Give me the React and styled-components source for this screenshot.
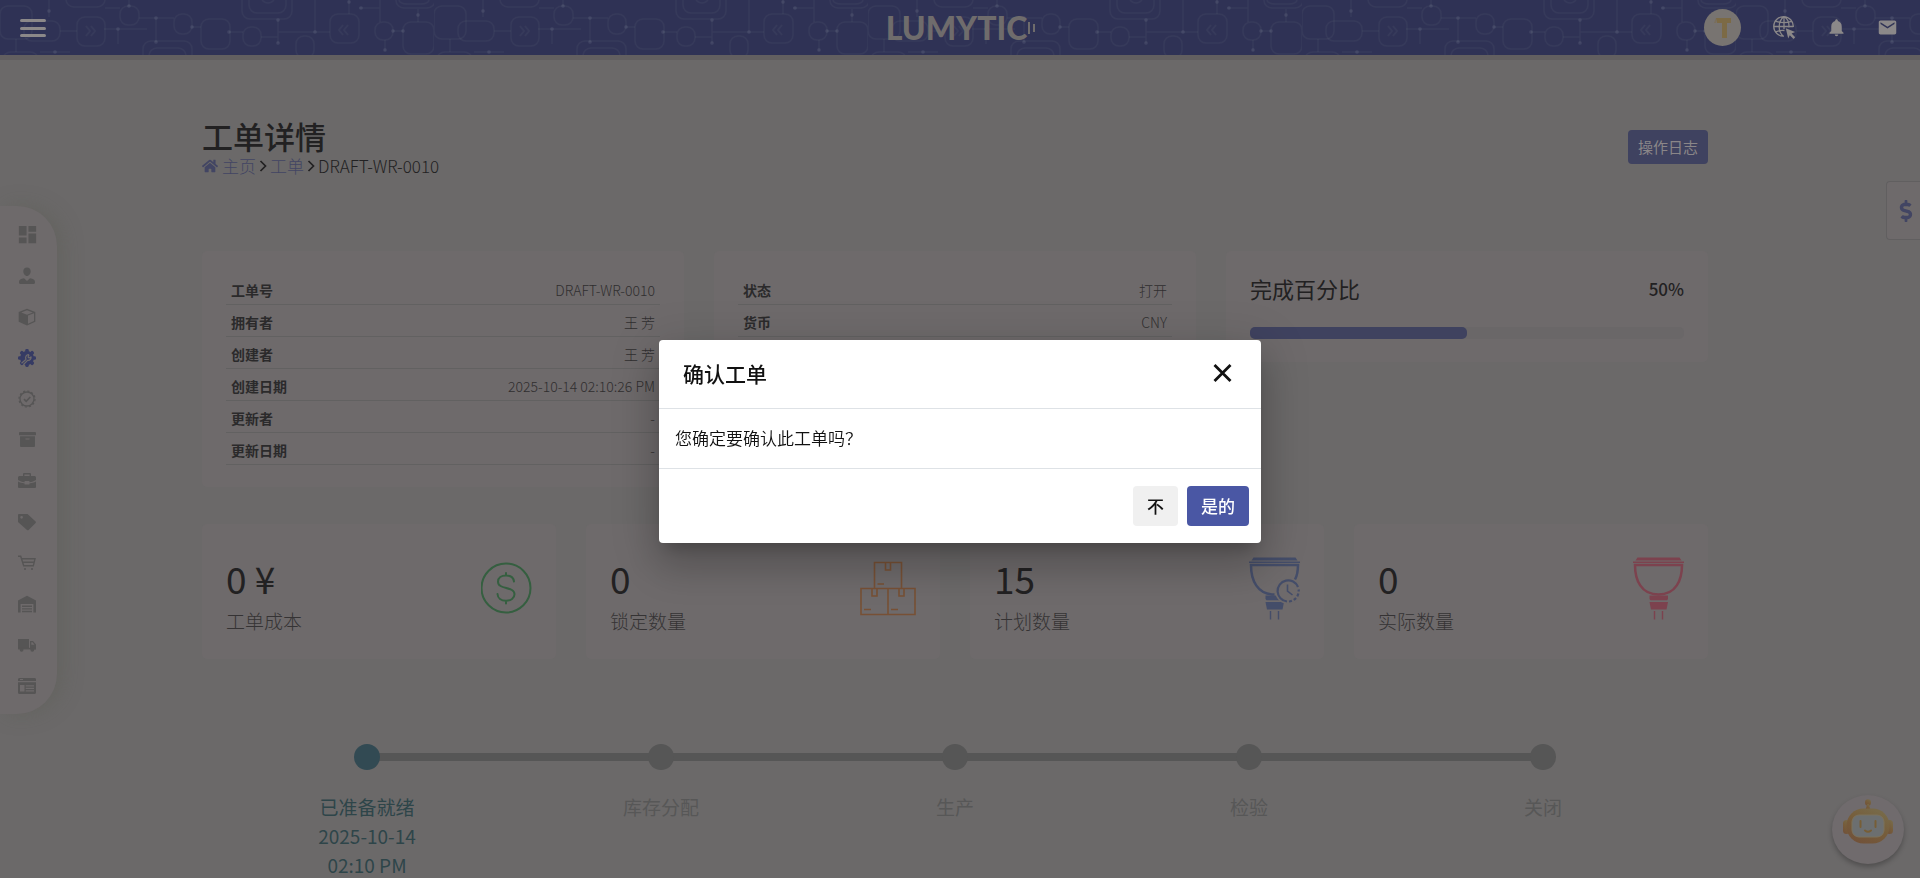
import React from "react";
import styled, { createGlobalStyle } from "styled-components";
import { FaHome, FaArchive, FaDollarSign } from "react-icons/fa";
import {
  MdDashboard,
  MdEmail,
  MdNotifications,
} from "react-icons/md";

const c = {
  page: "#6b6969",
  card: "#6e6a6b",
  header: "#2f3255",
  ink: "#222122",
  label: "#2b2a2b",
  value: "#302e2f",
  muted: "#575757",
  link: "#424563",
  teal: "#2e4549",
  rule: "#626161",
};

const GlobalStyle = createGlobalStyle`
  *, *::before, *::after { box-sizing: border-box; }
  html, body { margin: 0; padding: 0; }
  body {
    background: ${c.page};
    color: ${c.ink};
    font-family: "Noto Sans CJK SC", "Noto Sans", sans-serif;
    font-size: 17px;
  }
  button { font-family: inherit; cursor: pointer; }
  h1, h2, p, dl, dd, ol, ul { margin: 0; padding: 0; }
  ol, ul { list-style: none; }
`;

const Page = styled.div`
  position: relative;
  height: 100vh;
  overflow: hidden;
`;

const Header = styled.header`
  position: relative;
  display: grid;
  grid-template-columns: 1fr auto 1fr;
  align-items: center;
  height: 55px;
  padding: 0 22px 0 24px;
  background: ${c.header};
  box-shadow: 0 5px 0 #625f60;
`;

const Circuit = styled.svg`
  position: absolute;
  inset: 0;
  width: 100%;
  height: 100%;
`;

const IconButton = styled.button`
  position: relative;
  display: flex;
  align-items: center;
  justify-content: center;
  padding: 0;
  border: 0;
  background: none;
  color: ${(p) => p.$color || "#8b8889"};
`;

const MenuButton = styled(IconButton)`
  margin-left: -4px;
`;

const Brand = styled.a`
  position: relative;
  display: flex;
  align-items: center;
  gap: 1px;
  color: #6f6c6c;
  font: 900 32px/40px Lato, "Open Sans", sans-serif;
  text-decoration: none;
`;

const HeaderTools = styled.div`
  display: flex;
  align-items: center;
  justify-content: flex-end;
`;

const Avatar = styled.span`
  position: relative;
  display: flex;
  align-items: center;
  justify-content: center;
  width: 37px;
  height: 37px;
  margin-right: 32px;
  border-radius: 50%;
  background: #787471;
`;

const ToolGroup = styled.div`
  display: flex;
  align-items: center;
  gap: 30px;
`;

const SideNav = styled.nav`
  position: absolute;
  left: 0;
  top: 206px;
  width: 57px;
  padding: 8px 0 8px 7px;
  border-radius: 0 40px 40px 0;
  background: ${c.card};
  box-shadow: 6px 0 20px rgba(85, 88, 78, 0.35);
`;

const SideLink = styled.a`
  display: flex;
  align-items: center;
  justify-content: center;
  width: 40px;
  height: 41px;
  color: ${(p) => (p.$active ? "#363b64" : "#565555")};
`;

const PriceTab = styled.button`
  position: absolute;
  right: 0;
  top: 181px;
  display: flex;
  align-items: center;
  width: 34px;
  height: 59px;
  padding: 0 0 0 8px;
  border: 1px solid #615f60;
  border-right: 0;
  border-radius: 4px 0 0 4px;
  background: ${c.card};
  color: ${c.link};
`;

const Main = styled.main`
  padding: 62px 212px 0 202px;
`;

const TitleBar = styled.div`
  display: flex;
  align-items: center;
  justify-content: space-between;
  margin-bottom: 74px;
`;

const Title = styled.h1`
  font-size: 31px;
  font-weight: 500;
  line-height: 38px;
`;

const Crumbs = styled.nav`
  display: flex;
  align-items: center;
  gap: 3px;
  font-weight: 300;
  line-height: 22px;
`;

const CrumbLink = styled.a`
  display: flex;
  align-items: center;
  gap: 4px;
  color: ${c.link};
  text-decoration: none;
`;

const LogButton = styled.button`
  height: 34px;
  padding: 0 10px 2px;
  border: 0;
  border-radius: 4px;
  background: #3f4260;
  color: #8a8688;
  font-size: 15px;
`;

const InfoGrid = styled.section`
  display: grid;
  grid-template-columns: repeat(3, 1fr);
  align-items: start;
  gap: 30px;
  margin-bottom: 37px;
`;

const Card = styled.section`
  border-radius: 5px;
  background: ${c.card};
`;

const InfoList = styled.dl`
  padding: 22px 24px;
`;

const InfoRow = styled.div`
  display: flex;
  justify-content: space-between;
  height: 32px;
  padding: 6px 5px 0;
  border-bottom: 1px solid ${c.rule};
  font-size: 14px;
  line-height: 22px;
`;

const InfoLabel = styled.dt`
  color: ${c.label};
  font-weight: 700;
`;

const InfoValue = styled.dd`
  color: ${c.value};
  font-weight: 300;
`;

const ProgressCard = styled(Card)`
  padding: 22px 24px 23px;
`;

const ProgressHead = styled.div`
  display: flex;
  align-items: center;
  justify-content: space-between;
  margin-bottom: 23px;
  line-height: 31px;
  font-weight: 500;
`;

const ProgressTitle = styled.h2`
  font-size: 22px;
  font-weight: 400;
`;

const Track = styled.div`
  height: 12px;
  border-radius: 5px;
  background: #6a6768;
`;

const Fill = styled.div`
  height: 100%;
  border-radius: 5px;
  background: #3f425f;
`;

const StatGrid = styled.section`
  display: grid;
  grid-template-columns: repeat(4, 1fr);
  gap: 30px;
  margin-bottom: 85px;
`;

const StatCard = styled(Card)`
  display: flex;
  align-items: flex-start;
  justify-content: space-between;
  height: 135px;
  padding: 31px 24px 0;
`;

const StatValue = styled.p`
  font-size: 37px;
  line-height: 46px;
  margin-bottom: 5px;
`;

const StatLabel = styled.p`
  color: #353334;
  font-size: 19px;
  font-weight: 300;
  line-height: 30px;
`;

const StatIcon = styled.span`
  display: flex;
  padding-top: 2px;
`;

const Steps = styled.ol`
  display: grid;
  grid-template-columns: repeat(5, 1fr);
  padding: 0 18px;
`;

const Step = styled.li`
  position: relative;
  display: flex;
  flex-direction: column;
  align-items: center;
  gap: 22px;
  color: ${(p) => (p.$done ? c.teal : c.muted)};
  font-size: 19px;
  line-height: 29px;
  text-align: center;

  &:not(:last-child)::after {
    content: "";
    position: absolute;
    left: 50%;
    top: 9px;
    width: 100%;
    height: 8px;
    background: #565656;
  }
`;

const Dot = styled.span`
  position: relative;
  z-index: 1;
  width: 26px;
  height: 26px;
  border-radius: 50%;
  background: ${(p) => (p.$done ? "#324a53" : "#565656")};
`;

const StepText = styled.span`
  width: 110px;
`;

const ChatButton = styled.button`
  position: absolute;
  right: 16px;
  bottom: 14px;
  display: flex;
  justify-content: center;
  width: 72px;
  height: 69px;
  padding: 4px 0 0;
  border: 0;
  border-radius: 50%;
  background: #706b6d;
  box-shadow: 0 3px 5px rgba(0, 0, 0, 0.25);
`;

const Backdrop = styled.div`
  position: fixed;
  inset: 0;
  z-index: 10;
  display: flex;
  align-items: center;
  justify-content: center;
  padding-top: 4px;
`;

const Dialog = styled.div`
  width: 602px;
  border-radius: 4px;
  background: #fff;
  color: #111;
  box-shadow:
    0 11px 15px -7px rgba(0, 0, 0, 0.2),
    0 24px 38px 3px rgba(0, 0, 0, 0.14),
    0 9px 46px 8px rgba(0, 0, 0, 0.12);
`;

const DialogHead = styled.div`
  display: flex;
  align-items: center;
  justify-content: space-between;
  height: 69px;
  padding: 0 24px 2px;
  border-bottom: 1px solid #dee2e6;
`;

const DialogTitle = styled.h2`
  font-size: 21px;
  font-weight: 500;
  line-height: 30px;
`;

const DialogBody = styled.p`
  padding: 16px 16px 18px;
  border-bottom: 1px solid #dee2e6;
  font-weight: 350;
  line-height: 25px;
`;

const DialogFoot = styled.div`
  display: flex;
  justify-content: flex-end;
  gap: 9px;
  padding: 17px 12px;
`;

const DialogButton = styled.button`
  height: 40px;
  padding: 0 14px 1px;
  border: 0;
  border-radius: 4px;
  background: ${(p) => (p.$primary ? "#4a57a4" : "#f0f0f0")};
  color: ${(p) => (p.$primary ? "#fff" : "#111")};
  font-size: 17px;
  font-weight: 500;
`;

/* Header pattern: rounded chips joined by traces, repeated across the bar */
const chips = [
  [0, 6, 32, 33], [24, 21, 36, 20], [77, 17, 28, 29], [66, -8, 39, 15],
  [120, 6, 19, 19], [174, 14, 18, 20], [242, -10, 50, 29], [249, -8, 37, 21],
  [201, 19, 29, 30], [243, 27, 18, 19], [296, 36, 18, 22], [330, 14, 29, 29],
  [375, 22, 18, 18], [396, -7, 39, 15], [403, 22, 31, 32], [143, 41, 49, 22],
  [149, 48, 37, 18], [3, 52, 35, 14], [262, -6, 12, 9], [399, -4, 30, 8],
];
const traces =
  "M49 0V17M129 0V6M156 18V42M104 29H147M139 18H174M192 27H201M229 32H243M278 20V43M278 32H330M315 0V32M349 0V14M359 8H380M380 0V22M393 31H403M418 9V22M385 40V51M60 31H77M118 29V44M16 39V52M40 52H70M261 37H278M105 8H120";
const nodes = [
  [49, 11], [129, 6], [156, 18], [156, 42], [118, 29], [192, 27], [229, 32],
  [278, 20], [278, 43], [315, 32], [349, 2], [361, 8], [393, 31], [403, 31],
  [418, 15], [385, 50], [55, 52],
];

const HeaderPattern = () => (
  <Circuit aria-hidden="true">
    <defs>
      <pattern id="circuit" width="434" height="55" patternUnits="userSpaceOnUse">
        <g fill="none" stroke="#7a8390" strokeOpacity="0.1" strokeWidth="1.400">
          {chips.map(([x, y, w, h]) => (
            <rect key={`${x}-${y}`} x={x} y={y} width={w} height={h} rx="8" />
          ))}
          <path d={traces} />
          <path d="M86 26l4 5-4 5M91 26l4 5-4 5M343 25l-4 5 4 5M348 25l-4 5 4 5" strokeWidth="1.800" />
        </g>
        <g fill="#8a93a5" fillOpacity="0.18">
          {nodes.map(([x, y]) => (
            <circle key={`${x}-${y}`} cx={x} cy={y} r="1.800" />
          ))}
        </g>
      </pattern>
    </defs>
    <rect width="100%" height="100%" fill="url(#circuit)" />
  </Circuit>
);

const MenuIcon = () => (
  <svg width="26" height="20" viewBox="0 0 26 20" fill="currentColor">
    <rect y="1" width="26" height="3" rx="1.500" />
    <rect y="9" width="26" height="3" rx="1.500" />
    <rect y="16" width="26" height="3" rx="1.500" />
  </svg>
);

const PlugMark = () => (
  <svg width="8" height="14" viewBox="0 0 8 14" fill="currentColor">
    <rect x="0" y="1" width="2" height="12" />
    <rect x="5" y="3" width="2" height="8" />
  </svg>
);

const AvatarMark = () => (
  <svg width="18" height="21" viewBox="0 0 18 21" fill="#7c6a45">
    <path d="M2 1h15v5h-4v15H8V6H3z" />
    <path d="M0 6l2-5v5z" fillOpacity=".5" />
  </svg>
);

const GlobeCursor = () => (
  <svg width="23" height="25" viewBox="0 0 23 25" fill="none" stroke="currentColor" strokeWidth="1.300">
    <path d="M20.300 12A9.800 9.800 0 1 0 11 21.200M11 1.500V14M1.200 11.500H20.300M3 6.300Q11 9 18.500 6.300M3 16.800Q7 15 11.500 15.500M10.500 1.800C4.800 7 4.800 16 10 21M11.500 1.800C15.500 5 16.500 9 15.600 12.500" />
    <path d="M12.800 13.300l9.400 3.600-3.600 1.700 3.600 3.700-1.700 1.700-3.700-3.700-1.600 3.200z" fill="currentColor" stroke="none" />
  </svg>
);

const CloseIcon = () => (
  <svg width="28" height="28" viewBox="0 0 28 28" fill="none" stroke="currentColor" strokeWidth="2.800">
    <path d="M5.500 6l16 16M21.500 6l-16 16" />
  </svg>
);

const glyphProps = { width: 18, height: 18, viewBox: "0 0 18 18", fill: "currentColor" };

const PersonGlyph = () => (
  <svg {...glyphProps}>
    <path d="M9 .5c2.300 0 3.700 1.500 3.700 3.700S11.100 9 9 9 5.300 6.400 5.300 4.200 6.700.5 9 .5zM6 11.300l3 2.700 3-2.700c3.300.5 5 1.500 5 3.700 0 1.700-.6 2-2 2H3c-1.400 0-2-.3-2-2 0-2.200 1.700-3.200 5-3.700z" />
  </svg>
);

const BoxGlyph = () => (
  <svg {...glyphProps}>
    <path d="M9 .8l8.300 3.300v9.600L9 17.500.7 13.700V4.100zM10 7.600v8.100l6-2.700V5.200zM9 2.200L3.200 4.500 9 6.700l5.800-2.200z" fillRule="evenodd" />
  </svg>
);

const gearTeeth = [0, 45, 90, 135, 180, 225, 270, 315];

const ServiceGlyph = () => (
  <svg {...glyphProps}>
    <circle cx="9" cy="9" r="6.900" />
    {gearTeeth.map((angle) => (
      <rect key={angle} x="7.200" y="0" width="3.600" height="4" rx="1.400" transform={`rotate(${angle} 9 9)`} />
    ))}
    <path d="M8.200 10.400a2.900 2.900 0 0 1 2.900-4.600M12.900 7.400a2.900 2.900 0 0 1-3.300 3.900L5.500 15.500M8.200 10.200L3.500 14.300M11 5.800l-.9 2.200 1 1 2-1" fill="none" stroke={c.card} strokeWidth="1.200" />
  </svg>
);

const QualityGlyph = () => (
  <svg {...glyphProps} fill="none" stroke="currentColor">
    <circle cx="9" cy="9" r="7" strokeWidth="1.300" />
    <circle cx="9" cy="9" r="8" strokeWidth="1.200" strokeDasharray="2.090 2.100" />
    <path d="M6 9.200l2.200 2.100L12.300 7" strokeWidth="1.600" />
  </svg>
);

const BriefcaseGlyph = () => (
  <svg {...glyphProps}>
    <path d="M5 4V2.300C5 1.500 5.500 1 6.300 1h5.400c.8 0 1.300.5 1.300 1.300V4h3.300c1 0 1.700.7 1.700 1.700V8c-2 1.200-4 1.900-6.600 2.200V9H6.600v1.200C4 9.900 2 9.200 0 8V5.700C0 4.700.7 4 1.700 4zm1.400 0h5.200V2.400H6.400zM0 9.600c2 1 4 1.600 6.600 1.900v1h4.800v-1c2.600-.3 4.600-.9 6.600-1.900v5.200c0 .8-.5 1.200-1.200 1.200H1.200C.5 16 0 15.600 0 14.800z" />
  </svg>
);

const TagGlyph = () => (
  <svg {...glyphProps}>
    <path d="M1 1h8.500L17.600 8.600q.6.700 0 1.400l-7 7q-.8.700-1.600 0L0 9V2q0-1 1-1zM3.600 3A1.300 1.300 0 1 0 3.600 5.700 1.300 1.300 0 1 0 3.600 3z" fillRule="evenodd" />
  </svg>
);

const CartGlyph = () => (
  <svg {...glyphProps} fill="none" stroke="currentColor" strokeWidth="1.400">
    <path d="M0 2.200h2.700l3 9.600h9.600L17 4.800H3.700M4.700 8.300h11.300" />
    <circle cx="7" cy="15" r="1" fill="currentColor" stroke="none" />
    <circle cx="14" cy="15" r="1" fill="currentColor" stroke="none" />
  </svg>
);

const WarehouseGlyph = () => (
  <svg {...glyphProps}>
    <path d="M0 5.400L9 .8l9 4.600V17.500h-2.600V9H2.600v8.500H0z" />
    <path d="M4 10.600h10v1.400H4zM4 13.200h10v1.300H4zM4 15.800h10v1.400H4z" />
  </svg>
);

const TruckGlyph = () => (
  <svg {...glyphProps}>
    <path d="M0 3h11v9.500H0zM12 5h3l3 3.500v4.700h-6zm1.300 1.200v2.600h3.200l-2-2.600z" fillRule="evenodd" />
    <path d="M0 11.800h18v1.600H0z" />
    <circle cx="3.600" cy="13.800" r="1.900" />
    <circle cx="14.300" cy="13.800" r="1.900" />
  </svg>
);

const PanelGlyph = () => (
  <svg {...glyphProps}>
    <path d="M1.500 1h15c1 0 1.500.6 1.500 1.500V4H0V2.500C0 1.600.6 1 1.500 1zM0 5.300h18v10.200c0 .9-.6 1.500-1.500 1.500h-15C.6 17 0 16.400 0 15.500zM2 8v6.500h4.500V8zm5.700.2v1.200h8.300V8.200zm0 2.600V12H16v-1.200zm0 2.500v1.200H16v-1.200z" fillRule="evenodd" />
    <path d="M2 2h3v1H2z" fill={c.card} />
  </svg>
);

const CoinIcon = () => (
  <svg width="51" height="62" viewBox="1 0 51 62" fill="none" stroke="#355f40" strokeWidth="2">
    <circle cx="26" cy="31" r="24.500" />
    <path d="M34 24.500c-.5-3.500-3.500-6-8-6s-8 2.400-8 6.200c0 8.300 16.500 4.300 16.500 12.600 0 3.900-3.700 6.400-8.500 6.400s-8.300-2.700-8.500-6.700M26 16v2.500M26 43.700v2.800" strokeLinecap="round" />
  </svg>
);

const BoxesIcon = () => (
  <svg width="56" height="62" viewBox="0 0 56 62" fill="none" stroke="#775035" strokeWidth="1.600">
    <path d="M14.500 31V5.500h27V31M1 31.500h54v26H1zM28 31.500v26M25.500 5.500v7.500h5V5.500M12 31.500V39h5v-7.500M39 31.500V39h5v-7.500M17.500 27H24M4 52.500h7M31 52.500h7" />
  </svg>
);

const LampBody = ({ d }) => (
  <>
    <path d="M4.500.5h42l2 3h-46z" fill="currentColor" stroke="none" />
    <path d="M0 5.300h51" strokeWidth="1.400" />
    <path d={d} strokeWidth="2.500" />
    <path d="M16.500 38.500h18.500v3.500l-1 1.200H17.500l-1-1.200zM16.500 45h18.500l-1.500 7.500H18z" fill="currentColor" stroke="none" />
    <path d="M21.500 54v8.500M29.500 54v8.500" strokeWidth="1.400" />
  </>
);

const LampIcon = () => (
  <svg width="51" height="63" viewBox="0 0 51 63" fill="none" stroke="currentColor" color="#7c424e">
    <LampBody d="M2 8h47c0 15-6 29.500-23.500 29.500S2 23 2 8z" />
  </svg>
);

const LampClockIcon = () => (
  <svg width="51" height="63" viewBox="0 0 51 63" fill="none" stroke="currentColor" color="#444d69">
    <LampBody d="M46 22.500C48.500 18 49 13 49 8H2c0 15 6 29.500 23.500 29.500" />
    <circle cx="39" cy="34" r="13" fill={c.card} stroke="none" />
    <path d="M49 30a10.600 10.600 0 1 0-11 14.500" strokeWidth="2.200" />
    <path d="M40 44.500a10.600 10.600 0 0 0 9.600-12" strokeWidth="2.200" strokeDasharray="3 2" />
    <path d="M38.500 27.500V34l5 4" strokeWidth="1.600" />
  </svg>
);

const RobotIcon = () => (
  <svg width="50" height="46" viewBox="0 0 50 46">
    <defs>
      <linearGradient id="shell" x1="0" y1="1" x2="0.6" y2="0">
        <stop offset="0" stopColor="#704f39" />
        <stop offset="0.6" stopColor="#765d3b" />
        <stop offset="1" stopColor="#776948" />
      </linearGradient>
    </defs>
    <g fill="url(#shell)">
      <ellipse cx="25" cy="3.500" rx="3" ry="3.300" />
      <path d="M24.200 5h1.600l1.700 6h-5z" />
      <rect x="0" y="21" width="7" height="14" rx="3.500" />
      <rect x="43" y="21" width="7" height="14" rx="3.500" />
      <rect x="3.500" y="9.500" width="43" height="35" rx="17" />
    </g>
    <rect x="9" y="16" width="32" height="22" rx="7" fill="#6c6f70" stroke="#7b725d" />
    <path d="M17.500 22v6M32.500 22v6M22 31.500q3 2.600 6 0" fill="none" stroke="#775e36" strokeWidth="2" strokeLinecap="round" />
  </svg>
);

const Chevron = () => (
  <svg width="8" height="14" viewBox="0 0 8 14" fill="none" stroke={c.ink} strokeWidth="1.700" aria-hidden="true">
    <path d="M1.500 2l5 5-5 5" />
  </svg>
);

const navItems = [
  ["仪表板", <MdDashboard size={23} />],
  ["用户", <PersonGlyph />],
  ["产品", <BoxGlyph />],
  ["工单", <ServiceGlyph />],
  ["质量", <QualityGlyph />],
  ["档案", <FaArchive size={17} />],
  ["业务", <BriefcaseGlyph />],
  ["标签", <TagGlyph />],
  ["采购", <CartGlyph />],
  ["仓库", <WarehouseGlyph />],
  ["物流", <TruckGlyph />],
  ["报表", <PanelGlyph />],
];

const orderInfo = [
  ["工单号", "DRAFT-WR-0010"],
  ["拥有者", "王 芳"],
  ["创建者", "王 芳"],
  ["创建日期", "2025-10-14 02:10:26 PM"],
  ["更新者", "-"],
  ["更新日期", "-"],
];

const statusInfo = [
  ["状态", "打开"],
  ["货币", "CNY"],
];

const stats = [
  ["0 ¥", "工单成本", <CoinIcon />],
  ["0", "锁定数量", <BoxesIcon />],
  ["15", "计划数量", <LampClockIcon />],
  ["0", "实际数量", <LampIcon />],
];

const steps = ["已准备就绪 2025-10-14 02:10 PM", "库存分配", "生产", "检验", "关闭"];
const progress = 50;

const InfoCard = ({ rows }) => (
  <Card>
    <InfoList>
      {rows.map(([label, value]) => (
        <InfoRow key={label}>
          <InfoLabel>{label}</InfoLabel>
          <InfoValue>{value}</InfoValue>
        </InfoRow>
      ))}
    </InfoList>
  </Card>
);

export default function App() {
  return (
    <>
      <GlobalStyle />
      <Page>
        <Header>
          <HeaderPattern />
          <div>
            <MenuButton aria-label="菜单"><MenuIcon /></MenuButton>
          </div>
          <Brand href="#">LUMYTIC<PlugMark /></Brand>
          <HeaderTools>
            <Avatar><AvatarMark /></Avatar>
            <ToolGroup>
              <IconButton aria-label="语言"><GlobeCursor /></IconButton>
              <IconButton aria-label="通知"><MdNotifications size={21} /></IconButton>
              <IconButton aria-label="邮件"><MdEmail size={21} /></IconButton>
            </ToolGroup>
          </HeaderTools>
        </Header>

        <Main>
          <TitleBar>
            <div>
              <Title>工单详情</Title>
              <Crumbs aria-label="面包屑">
                <CrumbLink href="#"><FaHome size={16} />主页</CrumbLink>
                <Chevron />
                <CrumbLink href="#">工单</CrumbLink>
                <Chevron />
                <span>DRAFT-WR-0010</span>
              </Crumbs>
            </div>
            <LogButton>操作日志</LogButton>
          </TitleBar>

          <InfoGrid>
            <InfoCard rows={orderInfo} />
            <InfoCard rows={statusInfo} />
            <ProgressCard>
              <ProgressHead>
                <ProgressTitle>完成百分比</ProgressTitle>
                <span>{progress}%</span>
              </ProgressHead>
              <Track role="progressbar" aria-label="完成百分比" aria-valuenow={progress}>
                <Fill style={{ width: `${progress}%` }} />
              </Track>
            </ProgressCard>
          </InfoGrid>

          <StatGrid>
            {stats.map(([value, label, icon]) => (
              <StatCard key={label}>
                <div>
                  <StatValue>{value}</StatValue>
                  <StatLabel>{label}</StatLabel>
                </div>
                <StatIcon>{icon}</StatIcon>
              </StatCard>
            ))}
          </StatGrid>

          <Steps>
            {steps.map((text, i) => (
              <Step key={text} $done={i === 0}>
                <Dot $done={i === 0} />
                <StepText>{text}</StepText>
              </Step>
            ))}
          </Steps>
        </Main>

        <SideNav aria-label="主导航">
          {navItems.map(([name, icon], i) => (
            <SideLink key={name} href="#" aria-label={name} $active={i === 3}>{icon}</SideLink>
          ))}
        </SideNav>
        <PriceTab aria-label="价格"><FaDollarSign size={22} /></PriceTab>
        <ChatButton aria-label="助手"><RobotIcon /></ChatButton>
      </Page>

      <Backdrop>
        <Dialog role="dialog" aria-modal="true" aria-labelledby="dialog-title">
          <DialogHead>
            <DialogTitle id="dialog-title">确认工单</DialogTitle>
            <IconButton aria-label="关闭" $color="#111"><CloseIcon /></IconButton>
          </DialogHead>
          <DialogBody>您确定要确认此工单吗？</DialogBody>
          <DialogFoot>
            <DialogButton>不</DialogButton>
            <DialogButton $primary>是的</DialogButton>
          </DialogFoot>
        </Dialog>
      </Backdrop>
    </>
  );
}
